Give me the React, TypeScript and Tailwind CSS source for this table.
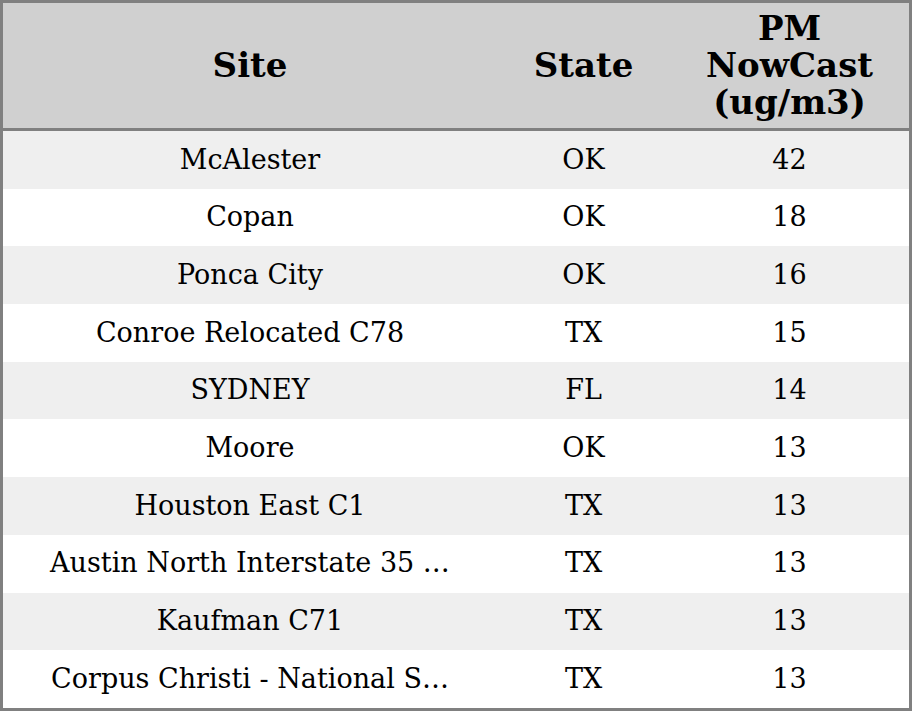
const ROWS = [
  { site: "McAlester", state: "OK", pm: 42 },
  { site: "Copan", state: "OK", pm: 18 },
  { site: "Ponca City", state: "OK", pm: 16 },
  { site: "Conroe Relocated C78", state: "TX", pm: 15 },
  { site: "SYDNEY", state: "FL", pm: 14 },
  { site: "Moore", state: "OK", pm: 13 },
  { site: "Houston East C1", state: "TX", pm: 13 },
  { site: "Austin North Interstate 35 …", state: "TX", pm: 13 },
  { site: "Kaufman C71", state: "TX", pm: 13 },
  { site: "Corpus Christi - National S…", state: "TX", pm: 13 },
];

export default function App() {
  return (
    <div className="h-[711px] w-[912px] border-[3px] border-[#808080] bg-white font-['DejaVu_Serif',serif] text-black">
      <div className="grid h-[128px] grid-cols-[494px_173px_1fr] items-center border-b-[3px] border-[#808080] bg-[#d0d0d0] text-[34px] font-bold leading-[37px]">
        <div className="text-center">Site</div>
        <div className="text-center">State</div>
        <div className="text-center">
          PM
          <br />
          NowCast
          <br />
          (ug/m3)
        </div>
      </div>
      <div className="flex flex-col">
        {ROWS.map((r, i) => (
          <div
            key={r.site}
            className={`grid h-[57.7px] grid-cols-[494px_173px_1fr] items-center text-[27px] ${
              i % 2 === 0 ? "bg-[#efefef]" : "bg-white"
            }`}
          >
            <div className="whitespace-nowrap text-center">{r.site}</div>
            <div className="text-center">{r.state}</div>
            <div className="text-center">{r.pm}</div>
          </div>
        ))}
      </div>
    </div>
  );
}
